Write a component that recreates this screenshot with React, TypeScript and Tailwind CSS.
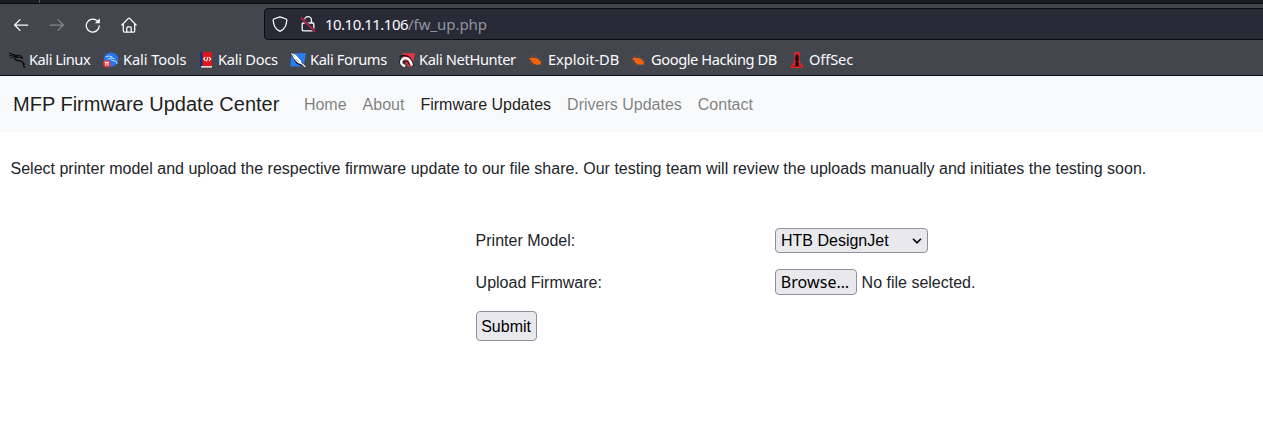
import type { ReactNode } from "react";

const ui = "font-['Noto_Sans','Open_Sans',sans-serif]";

function Arrow({ className }: { className: string }) {
  return (
    <svg className={className} width="16" height="16" viewBox="0 0 16 16" fill="none" stroke="currentColor" strokeWidth="1.25" strokeLinecap="round" strokeLinejoin="round">
      <path d="M14.8 8H1.7M7 2.6 1.6 8 7 13.4" />
    </svg>
  );
}

function Reload() {
  return (
    <svg className="ml-[20px]" width="16" height="16" viewBox="0 0 16 16" fill="none" stroke="currentColor" strokeWidth="1.3" strokeLinecap="round">
      <path d="M14.3 8.9A6.5 6.5 0 1 1 12.4 4" />
      <path d="M14.8 1.2V6.2H9.8Z" fill="currentColor" stroke="none" />
    </svg>
  );
}

function Home() {
  return (
    <svg className="ml-[20px]" width="16" height="16" viewBox="0 0 16 16" fill="none" stroke="currentColor" strokeWidth="1.25" strokeLinecap="round" strokeLinejoin="round">
      <path d="M.9 8 7.1 1.6q.9-.9 1.8 0L15.1 8M2.3 7v7q0 1 1 1h9.4q1 0 1-1V7M5.8 15v-4.2q0-1 1-1h2.4q1 0 1 1V15" />
    </svg>
  );
}

function Shield() {
  return (
    <svg width="16" height="16" viewBox="0 0 16 16" fill="none" stroke="currentColor" strokeWidth="1.3" strokeLinejoin="round">
      <path d="M8 .8 14.1 3q.7.3.7 1C14.6 9.4 12.3 13.4 8 15.4 3.7 13.4 1.4 9.4 1.2 4q0-.7.7-1Z" />
    </svg>
  );
}

function InsecureLock() {
  return (
    <svg className="ml-[12px]" width="16" height="16" viewBox="0 0 16 16" fill="none" stroke="currentColor" strokeWidth="1.3" strokeLinecap="round" strokeLinejoin="round">
      <path d="M4.5 7V4.2a3.5 3.5 0 0 1 7 0V7M3.2 7h9.6q1 0 1 1v5.8q0 1-1 1H3.2q-1 0-1-1V8q0-1 1-1Z" />
      <path d="M1.2 1.7 14.7 15.2" stroke="#282a36" strokeWidth="3" />
      <path d="M1.2 1.7 14.7 15.2" stroke="#e01e50" strokeWidth="1.3" />
    </svg>
  );
}

function Dragon() {
  return (
    <svg width="16" height="16" viewBox="0 0 16 16" fill="none" stroke="#08090b" strokeLinecap="round" strokeLinejoin="round">
      <path d="M.5 1.2 6.5 3.2M.6 3.5Q4 2.3 8 4M1.4 6Q4.6 3.6 8.2 4.6" strokeWidth="1" />
      <path d="M6 5.1Q5.2 8.6 9.2 8.7T14.2 11.2L15.2 15.3M12.4 9.4 15.3 12" strokeWidth="1.3" />
      <path d="M7.3 4.2Q10 1.7 12.4 4.3L13.5 6.3 10.5 5.3Q8.4 4.9 7.4 5.6" strokeWidth="1.1" />
    </svg>
  );
}

function Tools() {
  return (
    <svg width="16" height="16" viewBox="0 0 16 16" fill="none">
      <circle cx="8" cy="7.6" r="7.2" fill="#2477f2" />
      <path d="M2.5 5Q6 2.8 9.5 5.1M4.4 7.3Q8 4.4 11.7 6.9M7.4 6.7Q8.2 9 11 8.9T14 12" stroke="#c5ddff" strokeWidth="1" />
      <circle cx="3.8" cy="11.8" r="3.8" fill="#ed3039" />
      <path d="M1.6 10.3h4.4M2.8 10.4v3.3M4.9 10.4v3.3" stroke="#fff" strokeWidth="1" />
    </svg>
  );
}

function Docs() {
  return (
    <svg width="13" height="16" viewBox="0 0 13 16" fill="none">
      <path d="M0 1Q0 0 1 0h2v16H1q-1 0-1-1Z" fill="#0b397c" />
      <path d="M2.6 0H12v14H2.6Z" fill="#e0141c" />
      <path d="M1 14.1h11v1.5H1Z" fill="#eee9ed" />
      <path d="M5.4 5.2 3.6 7l1.8 1.8M9 5.2 10.8 7 9 8.8M7.9 4.8 6.5 9.3" stroke="#fff" strokeWidth="1.1" />
    </svg>
  );
}

function Forums() {
  return (
    <svg width="17" height="16" viewBox="0 0 17 16">
      <path d="M1.5 1.2H16L13.5 14.6H.4Z" fill="#277df3" />
      <path d="M0 .4 4.8 2 10 7.2l2.8 3.5 2.6 4.4-3.8-1.2-4.8-2L3 6.3Z" fill="#161b25" />
      <path d="m.8 1 5 1.8L10.8 8.5l1.8 4-4.8-1.4-4-4.6Z" fill="#fff" />
      <path d="m2.4 3.1 2.2 1.3M5.6 6.7l3.2 3" stroke="#58616c" strokeWidth=".6" />
      <path d="m11.8 11.8 3.5 3" stroke="#fff" strokeWidth="1.2" />
    </svg>
  );
}

function NetHunter() {
  return (
    <svg width="17" height="16" viewBox="0 0 17 16" fill="none">
      <path d="M3.2 1.2H16L13.2 14.6H9L4 6Z" fill="#ef333c" />
      <path d="M.7 4.8Q6.5 1.8 11 6q2.7 3 3.3 8.2M1.8 6.4Q-.4 10.8 3 14.3" stroke="#15161a" strokeWidth="1.5" />
      <path d="M6.2 14.1Q1.3 12.8 2.3 9.2 3.9 5.1 8.2 6.4 11.6 7.7 13 13.6" stroke="#fff" strokeWidth="2.3" />
      <path d="M4.8 11.3Q5.4 8.3 8.4 9.2L10.7 13" stroke="#26171b" strokeWidth="1.1" />
    </svg>
  );
}

function Bug() {
  return (
    <svg className="relative top-px" width="16" height="16" viewBox="0 0 16 16" fill="none">
      <path d="M4.7 4.2 2.5 2.5M7.8 4.8 8 2.4 6 1.5M3 6 .4 5.2M3.5 9.3l-2 .8M6.2 10.8l-2 1.8M10.5 6l2-.8M12.2 8h2.2M12 11l1.8 1.2" stroke="#94503a" strokeWidth=".7" />
      <path d="M1.8 5.6Q3.3 3.9 6.5 5 9.6 4.5 11.3 7.2q2.1 1.1 1.7 3.6-2.4 1.5-5.6.6Q3.5 10 3.4 7.4L1.6 7Z" fill="#f26310" />
    </svg>
  );
}

function OffSec() {
  return (
    <svg width="14" height="16" viewBox="0 0 14 16">
      <path d="M4.2 0h5.6v10L13 14v2H.8v-2L4.2 10Z" fill="#e3242b" />
      <path d="M6 2.4h2l.8 2.2v3.2L8.2 10l1 1.8-1.1 2.7H5.9l-1-2.7 1-1.8-.7-2.2V4.6Z" fill="#230b12" />
      <path d="M2.6 14.3h2.5M8.9 14.3h2.5" stroke="#721018" strokeWidth=".9" />
    </svg>
  );
}

function Bookmark({ icon, width, iconWidth = "w-[20px]", text }: { icon: ReactNode; width: string; iconWidth?: string; text: ReactNode }) {
  return (
    <a className={`flex h-6 shrink-0 items-center whitespace-nowrap ${width}`}>
      <span className={`shrink-0 ${iconWidth}`}>{icon}</span>
      <span className="-mt-0.5">{text}</span>
    </a>
  );
}

export default function App() {
  return (
    <div className="h-[435px] w-full overflow-hidden bg-white font-['Liberation_Sans',Arial,sans-serif] text-base text-[#212529]">
      <header className={`h-[76px] border-b border-[#0e0e16] bg-[#44464d] text-[#fbfbfe] ${ui}`}>
        <div className="flex h-1 border-b border-[#0c0c13] bg-[#1b1c22]">
          <span className="ml-[39px] w-px bg-[#55565d]" />
        </div>
        <div className="flex h-[40px] items-center">
          <div className="flex w-[264px] items-center pl-[13px] pt-px">
            <Arrow className="" />
            <Arrow className="ml-[20px] rotate-180 text-[#85868b]" />
            <Reload />
            <Home />
          </div>
          <div className="-mr-2 flex h-8 flex-1 items-center rounded-[4px] border border-[#0c0c13] bg-[#282a36] pl-[7px]">
            <Shield />
            <InsecureLock />
            <span className="ml-[9px] text-[15px] tracking-[-0.52px] text-[#fbfbfe]">
              10.10.11.106<span className="tracking-[-0.05px] text-[#9293a0]">/fw_up.php</span>
            </span>
          </div>
        </div>
        <nav className="flex h-[31px] items-center pl-[9px] text-[14.67px]">
          <Bookmark icon={<Dragon />} width="w-[94px] tracking-[-0.48px]" text="Kali Linux" />
          <Bookmark icon={<Tools />} width="w-[97px] tracking-[-0.1px]" text="Kali Tools" />
          <Bookmark icon={<Docs />} width="w-[90px] tracking-[-0.27px]" iconWidth="w-[18px]" text="Kali Docs" />
          <Bookmark icon={<Forums />} width="w-[109px] tracking-[-0.38px]" text="Kali Forums" />
          <Bookmark icon={<NetHunter />} width="w-[129px] tracking-[-0.37px]" text="Kali NetHunter" />
          <Bookmark icon={<Bug />} width="w-[103px] tracking-[-0.03px]" text="Exploit-DB" />
          <Bookmark icon={<Bug />} width="w-[159px] tracking-[-0.42px]" text="Google Hacking DB" />
          <Bookmark icon={<OffSec />} width="w-[80px] tracking-[-0.12px]" iconWidth="w-[19px]" text="OffSec" />
        </nav>
      </header>
      <nav className="flex h-14 items-center bg-[#f8f9fa] pl-[13px] text-black/50">
        <a className="mr-[16.5px] text-xl text-black/90">MFP Firmware Update Center</a>
        <div className="flex pt-[2px]">
          <a className="px-2">Home</a>
          <a className="px-2">About</a>
          <a className="px-2 text-black/90">Firmware Updates</a>
          <a className="px-2">Drivers Updates</a>
          <a className="px-2">Contact</a>
        </div>
      </nav>
      <main className="pt-[25px]">
        <p className="pl-[10.5px] leading-6">
          Select printer model and upload the respective firmware update to our file share. Our testing team will review the uploads manually and initiates the testing soon.
        </p>
        <form className="ml-[475.6px] mt-[47px] grid grid-cols-[299.4px_auto]">
          <span className="pt-px leading-6">Printer Model:</span>
          <button type="button" className="flex h-[25px] w-[153px] items-center justify-between rounded-[4px] border border-[#8f8f9d] bg-[#e9e9ed] pl-[5px] pr-[5px] text-black">
            HTB DesignJet
            <svg width="10" height="6" viewBox="0 0 10 6" fill="none" stroke="currentColor" strokeWidth="1.6">
              <path d="m1 .8 4 4 4-4" />
            </svg>
          </button>
          <span className="mt-[18px] leading-6">Upload Firmware:</span>
          <div className="mt-4 flex h-[26px] items-center">
            <button type="button" className={`flex h-[26px] w-[82px] items-center justify-center rounded-[4px] border border-[#8f8f9d] bg-[#e9e9ed] text-black ${ui}`}>
              <span className="-ml-0.5 tracking-[0.1px]">Browse…</span>
            </button>
            <span className="ml-[4.6px] pt-0.5">No file selected.</span>
          </div>
          <button type="button" className="mt-4 h-[30px] w-[61px] rounded-[4px] border border-[#8f8f9d] bg-[#e9e9ed] pt-0.5 text-black">
            Submit
          </button>
        </form>
      </main>
    </div>
  );
}
